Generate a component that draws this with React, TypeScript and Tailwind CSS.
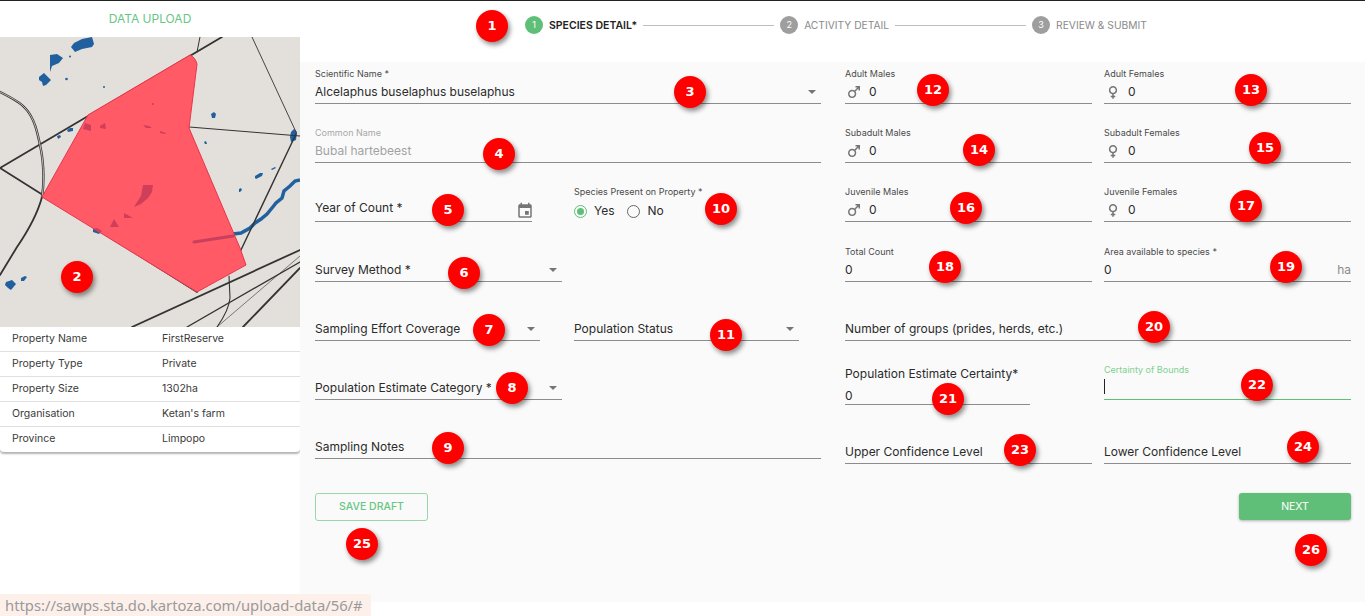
import React from "react";

const MALE = "M9.5 11c1.93 0 3.5 1.57 3.5 3.5S11.43 18 9.5 18 6 16.43 6 14.5 7.57 11 9.5 11zm0-2C6.46 9 4 11.46 4 14.5S6.46 20 9.5 20s5.5-2.46 5.5-5.5c0-1.16-.36-2.23-.97-3.12L18 7.42V10h2V4h-6v2h2.58l-3.97 3.97C11.73 9.36 10.66 9 9.5 9z";
const FEMALE = "M17.5 9.5C17.5 6.46 15.04 4 12 4S6.5 6.46 6.5 9.5c0 2.7 1.94 4.93 4.5 5.4V17H9v2h2v2h2v-2h2v-2h-2v-2.1c2.56-.47 4.5-2.7 4.5-5.4zm-9 0C8.5 7.57 10.07 6 12 6s3.5 1.57 3.5 3.5S13.93 13 12 13s-3.5-1.57-3.5-3.5z";
const EVENT = "M17 12h-5v5h5v-5zM16 1v2H8V1H6v2H5c-1.11 0-1.99.9-1.99 2L3 19c0 1.1.89 2 2 2h14c1.1 0 2-.9 2-2V5c0-1.1-.9-2-2-2h-1V1h-2zm3 18H5V8h14v11z";

const badges: [string, string][] = [
  ["1", "left-[476px] top-[9px]"],
  ["2", "left-[61px] top-[260px]"],
  ["3", "left-[674px] top-[75px]"],
  ["4", "left-[483px] top-[137px]"],
  ["5", "left-[432px] top-[193px]"],
  ["6", "left-[448px] top-[256px]"],
  ["7", "left-[473px] top-[313px]"],
  ["8", "left-[496px] top-[371px]"],
  ["9", "left-[432px] top-[431px]"],
  ["10", "left-[705px] top-[192px]"],
  ["11", "left-[710px] top-[318px]"],
  ["12", "left-[917px] top-[73px]"],
  ["13", "left-[1235px] top-[73px]"],
  ["14", "left-[963px] top-[133px]"],
  ["15", "left-[1249px] top-[131px]"],
  ["16", "left-[950px] top-[191px]"],
  ["17", "left-[1230px] top-[189px]"],
  ["18", "left-[929px] top-[250px]"],
  ["19", "left-[1270px] top-[250px]"],
  ["20", "left-[1138px] top-[310px]"],
  ["21", "left-[932px] top-[382px]"],
  ["22", "left-[1241px] top-[368px]"],
  ["23", "left-[1004px] top-[433px]"],
  ["24", "left-[1287px] top-[430px]"],
  ["25", "left-[346px] top-[527px]"],
  ["26", "left-[1295px] top-[533px]"],
];

function Caret() {
  return <span className="ml-auto mr-[5px] h-0 w-0 border-x-[4px] border-t-[4px] border-x-transparent border-t-[#757575]" />;
}

function Sex({ d }: { d: string }) {
  return (
    <svg viewBox="0 0 24 24" className="mr-[4px] h-[18px] w-[18px] shrink-0 fill-[#757575]">
      <path d={d} />
    </svg>
  );
}

function Field({
  label,
  value,
  className = "",
  select,
  icon,
  disabled,
  suffix,
}: {
  label?: string;
  value?: string;
  className?: string;
  select?: boolean;
  icon?: string;
  disabled?: boolean;
  suffix?: string;
}) {
  return (
    <div className={`flex h-[42px] flex-col justify-end border-b border-[#8c8c8c] ${className}`}>
      {label && (
        <div className={`pb-[2px] text-[9px] leading-[12px] ${disabled ? "text-[#a8a8a8]" : "text-[#4a4a4a]"}`}>{label}</div>
      )}
      <div className={`mb-px flex h-[20px] items-center text-[12px] ${disabled ? "text-[#a3a3a3]" : "text-[#2b2b2b]"}`}>
        {icon && <Sex d={icon} />}
        <span className={icon ? "ml-[2px]" : ""}>{value}</span>
        {select && <Caret />}
        {suffix && <span className="ml-auto text-[#8a8a8a]">{suffix}</span>}
      </div>
    </div>
  );
}

function StepDot({ n, active }: { n: string; active?: boolean }) {
  return (
    <span className={`flex h-[18px] w-[18px] items-center justify-center rounded-full text-[9px] text-white ${active ? "bg-[#5fbf78]" : "bg-[#9e9e9e]"}`}>
      {n}
    </span>
  );
}

function MapView() {
  return (
    <svg viewBox="0 37 300 290" className="block h-[290px] w-[300px] bg-[#e3dfdb]">
      <g className="fill-[#21609f]">
        <path d="M71 47l3-4 8-4 10-2 2 7-2 3-10 2-7 3z" />
        <path d="M50 55l7-1 6 4-4 5-7 3-2 6z" />
        <path d="M39 77l5-4 7 7-5 5-3 1-1-4-3-2z" />
        <circle cx="66.500" cy="79" r="1.300" />
        <circle cx="104" cy="87" r="1" />
        <circle cx="70" cy="56.500" r="1" />
        <path d="M211 114l3-2 2 2-1 4-3 0z" />
        <path d="M204 142l2-1 1 3-2 0z" />
        <path d="M291 132l3-3 3 3-1 8-5 2-1-5z" />
        <path d="M255 176l5-3 3 0-1 3-6 3-1-1z" />
        <path d="M271 169l4-2 1 1-4 2z" />
        <path d="M239 189l2-1 1 2-2 2-1 0z" />
        <path d="M6 282l6-2 4 4-5 6-3-2-3-3z" />
        <path d="M21 278l4-2 2 1-3 4-3 0z" />
        <path d="M67 130l3-2 3 0 0 3-5 1z" />
        <path d="M57 136l3-1 1 2-3 2z" />
        <path d="M93 229l4-2 5 4-3 3-6-2z" />
      </g>
      <path d="M233 234l8-1 9-5 5-5 6-4 6-5 5-6 4-5 6-5 2-7 6-5 5-5 5-1" fill="none" stroke="#21609f" strokeWidth="3.500" />
      <g fill="none" strokeLinecap="round" stroke="#333333">
        <path d="M0 168L222 37" strokeWidth="1.800" />
        <path d="M0 168L197 292" strokeWidth="1.800" />
        <path d="M197 52L200 37" strokeWidth="1" />
        <path d="M252 37L296 132" strokeWidth="0.900" />
        <path d="M189 127L300 136" strokeWidth="1" />
        <path d="M296 134L240 252" strokeWidth="1.400" />
        <path d="M0 92C10 97 20 102 25 108C35 118 38 135 41 150C44 165 44 185 42 197" strokeWidth="2.400" />
        <path d="M42 197C38 212 30 228 17 247L0 275" strokeWidth="1.800" />
        <path d="M132 327L300 250" strokeWidth="1.800" />
        <path d="M187 327L300 262" strokeWidth="1.300" />
        <path d="M243 327L300 268" strokeWidth="1.800" />
        <path d="M229 276L230 298C229 310 222 320 217 327" strokeWidth="1.100" />
        <path d="M217 327L300 256" strokeWidth="0.600" />
      </g>
      <path d="M0 92C10 97 20 102 25 108C35 118 38 135 41 150C44 165 44 185 42 197" fill="none" stroke="#e3dfdb" strokeWidth="0.800" />
      <path d="M190 55Q195 57 197 64L189 128L240 248L246 265L197 292L42 197L88 115Z" fill="#ff5a66" stroke="#e8354c" strokeWidth="1" />
      <g className="fill-[#cf3f59]">
        <path d="M85 123l6 2v6l-8-2z" />
        <path d="M100 126l5-3 1 6-6-1z" />
        <path d="M143 125l6 1 3 2-6 0z" />
        <path d="M160 131l6 2-1 1-5-1z" />
        <circle cx="153" cy="104" r="1" />
        <path d="M143 185h10l-1 7-4 6-7 6-7 3 3-5 4-6z" />
        <path d="M114 219l5 8-9 0z" />
        <path d="M124 213l9 5-9 0z" />
        <path d="M93 229l4-1 5 3-2 2z" />
      </g>
      <path d="M194 242L233 236" fill="none" stroke="#c93f5e" strokeWidth="3" strokeLinecap="round" />
    </svg>
  );
}

const rows = [
  ["Property Name", "FirstReserve"],
  ["Property Type", "Private"],
  ["Property Size", "1302ha"],
  ["Organisation", "Ketan's farm"],
  ["Province", "Limpopo"],
];

export default function App() {
  return (
    <div className="relative h-[616px] w-[1365px] overflow-hidden border-t border-[#222222] bg-white font-['Inter','Liberation_Sans',sans-serif] text-[#2b2b2b]">
      <div className="flex">
        <aside className="w-[300px] shrink-0">
          <div className="flex h-[36px] items-center justify-center text-[12px] text-[#67c683]">DATA UPLOAD</div>
          <MapView />
          <div className="rounded-b-[4px] shadow-[0_2px_2px_rgba(0,0,0,0.3)]">
            {rows.map(([a, b], i) => (
              <div key={a} className={`flex h-[25px] items-center pl-[12px] text-[10.500px] text-[#3a3a3a] ${i < 4 ? "border-b border-[#e0e0e0]" : "pb-px"}`}>
                <span className="w-[150px]">{a}</span>
                <span>{b}</span>
              </div>
            ))}
          </div>
        </aside>

        <main className="flex-1">
          <div className="flex h-[61px] items-start pl-[225px] pt-[15px]">
            <div className="flex items-center gap-[6px] text-[10.250px]">
              <StepDot n="1" active />
              <span className="pt-[2px] text-[10.500px] font-semibold text-[#222222]">SPECIES DETAIL*</span>
              <span className="h-px w-[131px] bg-[#bdbdbd]" />
              <StepDot n="2" />
              <span className="pt-[2px] text-[#8a8a8a]">ACTIVITY DETAIL</span>
              <span className="h-px w-[131px] bg-[#bdbdbd]" />
              <StepDot n="3" />
              <span className="pt-[2px] text-[#8a8a8a]">REVIEW &amp; SUBMIT</span>
            </div>
          </div>

          <div className="h-[540px] bg-[#fafafa] pl-[15px] pr-[14px]">
            <div className="flex gap-[24px]">
              <div className="flex w-[506px] flex-col gap-[17px]">
                <Field label="Scientific Name *" value="Alcelaphus buselaphus buselaphus" select />
                <Field label="Common Name" value="Bubal hartebeest" disabled />
                <div className="flex gap-[42px]">
                  <div className="flex h-[42px] w-[217px] items-center justify-between border-b border-[#8c8c8c] pt-[14px] text-[12px]">
                    <span>Year of Count *</span>
                    <svg viewBox="0 0 24 24" className="mt-[6px] h-[18px] w-[18px] fill-[#757575] -mr-[2px]">
                      <path d={EVENT} />
                    </svg>
                  </div>
                  <div className="flex flex-col pt-[6px]">
                    <span className="text-[9px] leading-[12px] text-[#4a4a4a]">Species Present on Property *</span>
                    <div className="mt-[4px] flex items-center text-[12px]">
                      <span className="flex h-[13px] w-[13px] items-center justify-center rounded-full border border-[#5fbf78]">
                        <span className="h-[7px] w-[7px] rounded-full bg-[#5fbf78]" />
                      </span>
                      <span className="ml-[7px]">Yes</span>
                      <span className="ml-[12px] h-[13px] w-[13px] rounded-full border border-[#666666]" />
                      <span className="ml-[8px]">No</span>
                    </div>
                  </div>
                </div>
                <Field value="Survey Method *" select className="mt-px w-[247px]" />
                <div className="flex gap-[34px]">
                  <Field value="Sampling Effort Coverage" select className="w-[225px]" />
                  <Field value="Population Status" select className="w-[225px]" />
                </div>
                <Field value="Population Estimate Category *" select className="w-[247px]" />
                <Field value="Sampling Notes" />
              </div>

              <div className="grid w-[506px] grid-cols-2 gap-x-[12px] gap-y-[17px]">
                <Field label="Adult Males" value="0" icon={MALE} />
                <Field label="Adult Females" value="0" icon={FEMALE} />
                <Field label="Subadult Males" value="0" icon={MALE} />
                <Field label="Subadult Females" value="0" icon={FEMALE} />
                <Field label="Juvenile Males" value="0" icon={MALE} />
                <Field label="Juvenile Females" value="0" icon={FEMALE} />
                <Field label="Total Count" value="0" className="mt-px" />
                <Field label="Area available to species *" value="0" suffix="ha" className="mt-px" />
                <div className="col-span-2">
                  <Field value="Number of groups (prides, herds, etc.)" />
                </div>
                <div className="flex h-[47px] w-[185px] flex-col border-b border-[#8c8c8c] text-[12px]">
                  <span className="mt-[7px]">Population Estimate Certainty*</span>
                  <span className="mt-[4px]">0</span>
                </div>
                <div className="h-[42px] border-b border-[#5fbf78]">
                  <div className="pt-[6px] text-[9px] leading-[12px] text-[#7dd18f]">Certainty of Bounds</div>
                  <div className="mt-[3px] h-[15px] w-px bg-[#222222]" />
                </div>
                <Field value="Upper Confidence Level" />
                <Field value="Lower Confidence Level" />
              </div>
            </div>

            <div className="mt-[29px] flex justify-between">
              <button className="h-[28px] w-[113px] rounded-[3px] border border-[#97d8a8] text-[10.500px] font-medium text-[#67c683]">SAVE DRAFT</button>
              <button className="h-[27px] w-[112px] rounded-[3px] bg-[#5fbf78] text-[10.500px] text-white shadow-[0_1px_3px_rgba(0,0,0,0.3)]">NEXT</button>
            </div>
          </div>
        </main>
      </div>

      <div className="absolute bottom-0 left-0 flex h-[22px] w-[371px] items-center rounded-tr-[3px] bg-[#fdf0ea] pl-[5px] font-['Noto_Sans',sans-serif] text-[14.800px] text-[#9a9a9a]">
        https://sawps.sta.do.kartoza.com/upload-data/56/#
      </div>

      {badges.map(([n, pos]) => (
        <div key={n} className={`absolute flex h-[32px] w-[32px] items-center justify-center rounded-full bg-[#ff0000] font-['DejaVu_Sans',sans-serif] text-[13px] font-bold text-white shadow-[2px_3px_5px_rgba(0,0,0,0.45)] ${pos}`}>
          {n}
        </div>
      ))}
    </div>
  );
}
